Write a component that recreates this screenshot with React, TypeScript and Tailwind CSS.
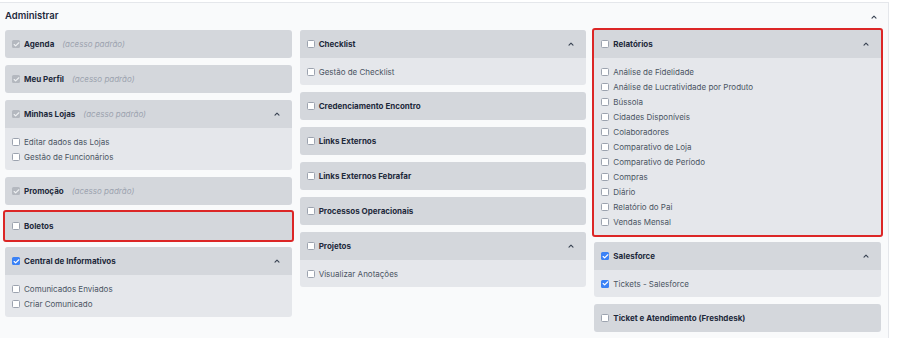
import { Check } from "lucide-react";

type Mark = "empty" | "blue" | "gray";

type Item = { label: string; mark?: Mark };

type CardProps = {
  title: string;
  note?: string;
  mark?: Mark;
  items?: Item[];
  highlight?: boolean;
};

function Box({ mark = "empty" }: { mark?: Mark }) {
  if (mark === "blue") {
    return (
      <span className="flex h-[8px] w-[8px] shrink-0 items-center justify-center rounded-[1.5px] bg-[#3b82f6]">
        <Check className="h-[7px] w-[7px] text-white" strokeWidth={4} />
      </span>
    );
  }
  if (mark === "gray") {
    return (
      <span className="flex h-[8px] w-[8px] shrink-0 items-center justify-center rounded-[1.5px] bg-[#b4b8bf]">
        <Check className="h-[7px] w-[7px] text-[#eef0f2]" strokeWidth={4} />
      </span>
    );
  }
  return (
    <span className="h-[8px] w-[8px] shrink-0 rounded-[1.5px] border border-[#9ca3af] bg-white" />
  );
}

function Chevron() {
  return (
    <svg width="6" height="4" viewBox="0 0 6 4" className="shrink-0">
      <polyline
        points="1,3.2 3,1.2 5,3.2"
        fill="none"
        stroke="#374151"
        strokeWidth="1.1"
        strokeLinecap="round"
        strokeLinejoin="round"
      />
    </svg>
  );
}

function Card({ title, note, mark = "empty", items, highlight }: CardProps) {
  return (
    <div
      className={
        "overflow-hidden bg-[#e5e7eb] " +
        (highlight ? "rounded-[1px] outline-2 outline-[#dc2626]" : "rounded-[3px]")
      }
    >
      {/* header */}
      <div className="flex h-[28px] items-center gap-[4px] bg-[#d4d7dc] pl-[7px] pr-[12px]">
        <Box mark={mark} />
        <span className="text-[8px] font-bold text-[#1e293b]">{title}</span>
        {note && (
          <span className="ml-[4px] text-[8px] italic text-[#9ca3af]">{note}</span>
        )}
        {items && (
          <span className="ml-auto">
            <Chevron />
          </span>
        )}
      </div>

      {/* body */}
      {items && (
        <div className="flex flex-col py-[6px] pl-[7px]">
          {items.map((item) => (
            <div key={item.label} className="flex h-[15px] items-center gap-[4px]">
              <Box mark={item.mark} />
              <span className="text-[8px] text-[#4b5563]">{item.label}</span>
            </div>
          ))}
        </div>
      )}
    </div>
  );
}

export default function App() {
  const relatorios = [
    "Análise de Fidelidade",
    "Análise de Lucratividade por Produto",
    "Bússola",
    "Cidades Disponíveis",
    "Colaboradores",
    "Comparativo de Loja",
    "Comparativo de Período",
    "Compras",
    "Diário",
    "Relatório do Pai",
    "Vendas Mensal",
  ].map((label) => ({ label }));

  return (
    <div
      className="h-[338px] w-[920px] overflow-hidden bg-white"
      style={{ fontFamily: "Inter, 'Noto Sans', sans-serif" }}
    >
      <div className="mt-[2px] h-[336px] w-[889px] border-r border-t border-[#e5e7eb] bg-[#f9fafb]">
        {/* title */}
        <div className="flex h-[27px] items-center justify-between pl-[5px] pr-[11px]">
          <h2 className="text-[9.5px] font-semibold text-[#1e293b]">Administrar</h2>
          <Chevron />
        </div>

        <div className="grid grid-cols-3 items-start gap-x-[8px] pl-[5px] pr-[7px]">
          {/* left */}
          <div className="flex flex-col gap-[7px]">
            <Card title="Agenda" note="(acesso padrão)" mark="gray" />
            <Card title="Meu Perfil" note="(acesso padrão)" mark="gray" />
            <Card
              title="Minhas Lojas"
              note="(acesso padrão)"
              mark="gray"
              items={[{ label: "Editar dados das Lojas" }, { label: "Gestão de Funcionários" }]}
            />
            <Card title="Promoção" note="(acesso padrão)" mark="gray" />
            <Card title="Boletos" highlight />
            <Card
              title="Central de Informativos"
              mark="blue"
              items={[{ label: "Comunicados Enviados" }, { label: "Criar Comunicado" }]}
            />
          </div>

          {/* middle */}
          <div className="flex flex-col gap-[7px]">
            <Card title="Checklist" items={[{ label: "Gestão de Checklist" }]} />
            <Card title="Credenciamento Encontro" />
            <Card title="Links Externos" />
            <Card title="Links Externos Febrafar" />
            <Card title="Processos Operacionais" />
            <Card title="Projetos" items={[{ label: "Visualizar Anotações" }]} />
          </div>

          {/* right */}
          <div className="flex flex-col gap-[7px]">
            <Card title="Relatórios" items={relatorios} highlight />
            <Card
              title="Salesforce"
              mark="blue"
              items={[{ label: "Tickets - Salesforce", mark: "blue" }]}
            />
            <Card title="Ticket e Atendimento (Freshdesk)" />
          </div>
        </div>
      </div>
    </div>
  );
}
